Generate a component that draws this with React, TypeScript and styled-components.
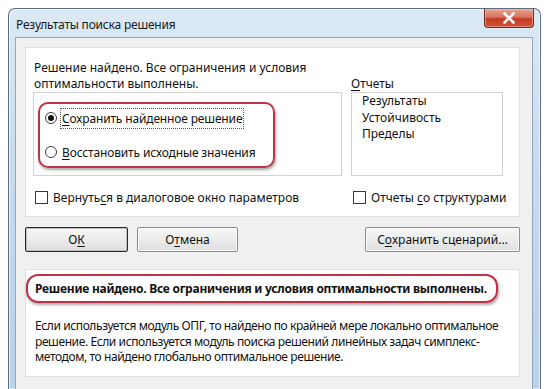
import React from "react";
import styled, { createGlobalStyle } from "styled-components";

const Global = createGlobalStyle`
  html, body {
    margin: 0;
    padding: 0;
    background: #ffffff;
    overflow: hidden;
  }
  body {
    font-family: "Noto Sans", "Open Sans", "DejaVu Sans", sans-serif;
    font-size: 12px;
    color: #111;
    white-space: nowrap;
  }
`;

const Window = styled.div`
  box-sizing: border-box;
  margin: 8px 0 0 8px;
  width: 533px;
  height: 381px;
  border: 1px solid #5d6b7c;
  border-bottom: none;
  border-radius: 7px 7px 0 0;
  background: linear-gradient(180deg, #dce9f6 0%, #c6dbf0 40%, #b9d1ea 100%);
  display: flex;
  flex-direction: column;
  box-shadow: inset 0 0 0 1px rgba(255, 255, 255, 0.6);
`;

const TitleBar = styled.div`
  height: 28px;
  display: flex;
  justify-content: space-between;
  padding-left: 7px;
`;

const Title = styled.span`
  align-self: center;
  font-size: 12px;
  color: #1a1a1a;
  margin-top: 3px;
  letter-spacing: -0.2px;
`;

const CloseButton = styled.div`
  width: 50px;
  height: 19px;
  margin-right: 6px;
  box-sizing: border-box;
  border: 1px solid #6d2a22;
  border-top: none;
  border-radius: 0 0 4px 4px;
  background: linear-gradient(180deg, #e9a693 0%, #d7725c 45%, #c23b22 55%, #d0533a 100%);
  display: flex;
  align-items: center;
  justify-content: center;
  box-shadow: inset 0 0 0 1px rgba(255, 200, 190, 0.5);
`;

const Client = styled.div`
  flex: 1;
  margin: 0 7px 0 6px;
  background: #f0f0f0;
  border: 1px solid #93a6ba;
  border-bottom: none;
  padding: 9px 12px 0 9px;
`;

const Panel = styled.div<{ $h: number }>`
  box-sizing: border-box;
  height: ${(p) => p.$h}px;
  background: #ffffff;
  border: 1px solid #e0e0e0;
`;

const TopGrid = styled.div`
  display: grid;
  grid-template-columns: 309px 152px;
  column-gap: 9px;
  padding: 12px 0 0 7px;
`;

const Message = styled.div`
  line-height: 15.5px;
  padding-left: 1px;
`;

const ReportsLabel = styled.div`
  align-self: end;
  line-height: 15px;
`;

const Key = styled.span`
  text-decoration: underline;
  text-underline-offset: 2px;
`;

const FrameBox = styled.div`
  box-sizing: border-box;
  margin-top: 1px;
  height: 84px;
  border: 1px solid #d2d2d2;
`;

const RadioBox = styled(FrameBox)`
  padding: 9px 0 0 4px;
`;

const Highlight = styled.div<{ $w: number; $h: number; $r: number }>`
  box-sizing: border-box;
  width: ${(p) => p.$w}px;
  height: ${(p) => p.$h}px;
  border: 2px solid #bd3446;
  border-radius: ${(p) => p.$r}px;
  box-shadow: 1px 2px 3px rgba(0, 0, 0, 0.35);
`;

const RadioList = styled.div`
  display: flex;
  flex-direction: column;
  gap: 14px;
  padding: 4px 0 0 5px;
`;

const RadioRow = styled.div`
  display: flex;
  align-items: center;
  height: 20px;
`;

const RadioCircle = styled.span<{ $on?: boolean }>`
  box-sizing: border-box;
  width: 12px;
  height: 12px;
  border-radius: 50%;
  border: 1px solid #3c3c3c;
  background: #fff;
  display: flex;
  align-items: center;
  justify-content: center;
  margin-right: 3px;
  &::after {
    content: "";
    width: 6px;
    height: 6px;
    border-radius: 50%;
    background: ${(p) => (p.$on ? "#111" : "transparent")};
  }
`;

const RadioText = styled.span<{ $focus?: boolean }>`
  padding: 1px 1px;
  letter-spacing: -0.15px;
  border: 1px dotted ${(p) => (p.$focus ? "#555" : "transparent")};
`;

const ListBox = styled(FrameBox)`
  padding: 0 0 0 10px;
  line-height: 16.5px;
`;

const CheckRow = styled.div`
  display: flex;
  align-items: center;
  margin-top: 14px;
  height: 15px;
`;

const CheckBox = styled.span`
  box-sizing: border-box;
  width: 13px;
  height: 13px;
  flex: none;
  border: 1px solid #3a3a3a;
  background: #fff;
  margin: 0 5px 0 2px;
`;

const ButtonRow = styled.div`
  display: flex;
  align-items: flex-start;
  gap: 9px;
  margin-top: 10px;
  height: 25px;
`;

const Button = styled.div<{ $w: number; $default?: boolean }>`
  box-sizing: border-box;
  width: ${(p) => p.$w}px;
  height: 25px;
  display: flex;
  align-items: center;
  justify-content: center;
  border: 1px solid ${(p) => (p.$default ? "#2a2a2a" : "#8a8a8a")};
  border-radius: 2px;
  background: linear-gradient(180deg, #f6f6f6 0%, #ececec 50%, #dedede 100%);
  box-shadow: inset 0 0 0 1px ${(p) => (p.$default ? "#bfbfbf" : "#fbfbfb")};
  &:last-child {
    margin-left: auto;
  }
`;

const BottomPanel = styled(Panel)`
  margin-top: 17px;
  padding: 4px 0 0 0;
`;

const BoldLine = styled.div`
  font-weight: 700;
  line-height: 25px;
  padding-left: 7px;
  letter-spacing: -0.25px;
`;

const Paragraph = styled.p`
  margin: 15px 0 0 9px;
  line-height: 15.5px;
  letter-spacing: -0.4px;
`;

const CloseIcon = () => (
  <svg width="14" height="12" viewBox="0 0 14 12">
    <path
      d="M2.5 1.5 L11.5 10.5 M11.5 1.5 L2.5 10.5"
      stroke="#ffffff"
      strokeWidth="2.6"
      strokeLinecap="round"
    />
  </svg>
);

export default function App() {
  return (
    <>
      <Global />
      <Window>
        <TitleBar>
          <Title>Результаты поиска решения</Title>
          <CloseButton>
            <CloseIcon />
          </CloseButton>
        </TitleBar>
        <Client>
          <Panel $h={170}>
            <TopGrid>
              <Message>
                Решение найдено. Все ограничения и условия
                <br />
                оптимальности выполнены.
              </Message>
              <ReportsLabel>
                <Key>О</Key>тчеты
              </ReportsLabel>
              <RadioBox>
                <Highlight $w={237} $h={66} $r={10}>
                  <RadioList>
                    <RadioRow>
                      <RadioCircle $on />
                      <RadioText $focus>
                        <Key>С</Key>охранить найденное решение
                      </RadioText>
                    </RadioRow>
                    <RadioRow>
                      <RadioCircle />
                      <RadioText>
                        <Key>В</Key>осстановить исходные значения
                      </RadioText>
                    </RadioRow>
                  </RadioList>
                </Highlight>
              </RadioBox>
              <ListBox>
                <div>Результаты</div>
                <div>Устойчивость</div>
                <div>Пределы</div>
              </ListBox>
              <CheckRow>
                <CheckBox />
                <span>
                  Вернуть<Key>с</Key>я в диалоговое окно параметров
                </span>
              </CheckRow>
              <CheckRow>
                <CheckBox />
                <span>
                  Отчеты <Key>с</Key>о структурами
                </span>
              </CheckRow>
            </TopGrid>
          </Panel>
          <ButtonRow>
            <Button $w={103} $default>
              О<Key>К</Key>
            </Button>
            <Button $w={101}>
              О<Key>т</Key>мена
            </Button>
            <Button $w={155}>
              С<Key>о</Key>хранить сценарий...
            </Button>
          </ButtonRow>
          <BottomPanel $h={108}>
            <Highlight $w={472} $h={29} $r={12}>
              <BoldLine>
                Решение найдено. Все ограничения и условия оптимальности выполнены.
              </BoldLine>
            </Highlight>
            <Paragraph>
              Если используется модуль ОПГ, то найдено по крайней мере локально оптимальное
              <br />
              решение. Если используется модуль поиска решений линейных задач симплекс-
              <br />
              методом, то найдено глобально оптимальное решение.
            </Paragraph>
          </BottomPanel>
        </Client>
      </Window>
    </>
  );
}
